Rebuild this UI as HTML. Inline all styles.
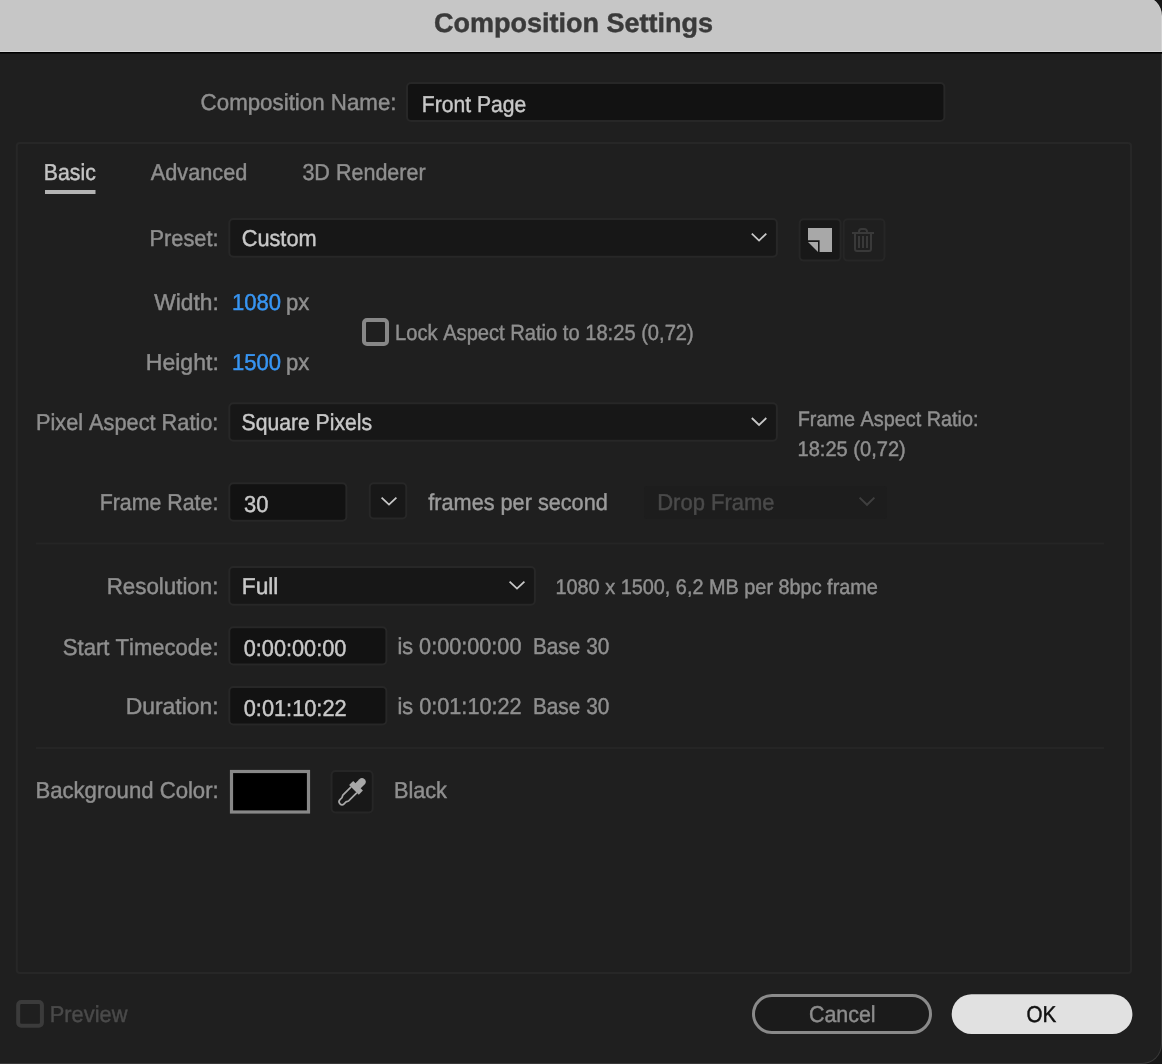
<!DOCTYPE html>
<html><head><meta charset="utf-8"><title>Composition Settings</title>
<style>
html,body{margin:0;padding:0;background:#141414;overflow:hidden}
svg{display:block;will-change:transform;text-rendering:geometricPrecision;font-family:"Liberation Sans",sans-serif;font-kerning:none}
</style></head><body>
<svg width="1162" height="1064" viewBox="0 0 1162 1064">
<rect x="0" y="0" width="1162" height="1064" rx="0" fill="#171717"/>
<path d="M0,0 H1142 A20,20 0 0 1 1162,20 V1044 A20,20 0 0 1 1142,1064 H0 Z" fill="#383838"/>
<path d="M0,0 H1142 A19,19 0 0 1 1161,19 V1044 A19,19 0 0 1 1142,1063 H0 Z" fill="#1f1f1f"/>
<path d="M0,-4 H1142 A20,20 0 0 1 1162,16 V51 H0 Z" fill="#d4d4d4"/>
<path d="M0,-4 H1142 A19,19 0 0 1 1161,15 V51 H0 Z" fill="#c6c6c6"/>
<rect x="0" y="51" width="1162" height="1" rx="0" fill="#d5d5d5"/>
<rect x="0" y="52" width="1162" height="1" rx="0" fill="#000000"/>
<rect x="0" y="53" width="1162" height="1" rx="0" fill="#101010"/>
<text x="434.09" y="32.20" font-size="27" font-weight="bold" fill="#3a3a3a" stroke="#3a3a3a" stroke-width="0.45" textLength="279.02" lengthAdjust="spacingAndGlyphs">Composition Settings</text>
<text x="200.62" y="110.20" font-size="23" font-weight="normal" fill="#8f8f8f" stroke="#8f8f8f" stroke-width="0.45" textLength="195.92" lengthAdjust="spacingAndGlyphs">Composition Name:</text>
<rect x="407.0" y="83.0" width="537.4" height="38" rx="4" fill="#121212" stroke="#272727" stroke-width="2"/>
<text x="421.77" y="112.00" font-size="23" font-weight="normal" fill="#c8c8c8" stroke="#c8c8c8" stroke-width="0.45" textLength="104.47" lengthAdjust="spacingAndGlyphs">Front Page</text>
<rect x="16.8" y="143" width="1114.2" height="830" rx="3" fill="#1f1f1f" stroke="#272727" stroke-width="2"/>
<text x="43.86" y="180.20" font-size="23" font-weight="normal" fill="#c4c4c4" stroke="#c4c4c4" stroke-width="0.45" textLength="51.90" lengthAdjust="spacingAndGlyphs">Basic</text>
<rect x="45" y="190" width="50.5" height="4" rx="0" fill="#b4b4b4"/>
<text x="150.76" y="180.20" font-size="23" font-weight="normal" fill="#8f8f8f" stroke="#8f8f8f" stroke-width="0.45" textLength="96.54" lengthAdjust="spacingAndGlyphs">Advanced</text>
<text x="302.38" y="180.20" font-size="23" font-weight="normal" fill="#8f8f8f" stroke="#8f8f8f" stroke-width="0.45" textLength="123.28" lengthAdjust="spacingAndGlyphs">3D Renderer</text>
<text x="149.41" y="246.10" font-size="23" font-weight="normal" fill="#8f8f8f" stroke="#8f8f8f" stroke-width="0.45" textLength="69.19" lengthAdjust="spacingAndGlyphs">Preset:</text>
<rect x="229.3" y="219.0" width="547.5999999999999" height="37.80000000000001" rx="4" fill="#171717" stroke="#272727" stroke-width="2"/>
<text x="241.70" y="246.10" font-size="23" font-weight="normal" fill="#c8c8c8" stroke="#c8c8c8" stroke-width="0.45" textLength="74.94" lengthAdjust="spacingAndGlyphs">Custom</text>
<polyline points="751.8,233.6 759.05,240.6 766.3,233.6" fill="none" stroke="#c8c8c8" stroke-width="1.8" stroke-linecap="butt" stroke-linejoin="miter"/>
<rect x="799.6" y="219.2" width="41.0" height="41.400000000000034" rx="4" fill="#181818" stroke="#262626" stroke-width="2"/>
<path d="M808,228 H832 V252 H819.6 V240.3 H808 Z" fill="#a8a8a8"/>
<path d="M808,242 H818 V252 Z" fill="#a8a8a8"/>
<rect x="843.7" y="219.2" width="40.799999999999955" height="41.400000000000034" rx="4" fill="#1f1f1f" stroke="#262626" stroke-width="2"/>
<g fill="none" stroke="#393939" stroke-width="2"><path d="M852,233 H874"/><path d="M859,233 V231.5 A2.5,2.5 0 0 1 861.5,229 H864.5 A2.5,2.5 0 0 1 867,231.5 V233"/><path d="M855,234 V249 A2,2 0 0 0 857,251 H869 A2,2 0 0 0 871,249 V234"/><path d="M859,236 V248 M863,236 V248 M867,236 V248"/></g>
<text x="154.20" y="309.70" font-size="23" font-weight="normal" fill="#8f8f8f" stroke="#8f8f8f" stroke-width="0.45" textLength="64.58" lengthAdjust="spacingAndGlyphs">Width:</text>
<text x="232.02" y="309.70" font-size="23" font-weight="normal" fill="#3895f2" stroke="#3895f2" stroke-width="0.45" textLength="49.04" lengthAdjust="spacingAndGlyphs">1080</text>
<text x="286.08" y="309.70" font-size="23" font-weight="normal" fill="#8f8f8f" stroke="#8f8f8f" stroke-width="0.45" textLength="23.26" lengthAdjust="spacingAndGlyphs">px</text>
<text x="145.81" y="369.80" font-size="23" font-weight="normal" fill="#8f8f8f" stroke="#8f8f8f" stroke-width="0.45" textLength="72.99" lengthAdjust="spacingAndGlyphs">Height:</text>
<text x="232.02" y="369.80" font-size="23" font-weight="normal" fill="#3895f2" stroke="#3895f2" stroke-width="0.45" textLength="49.04" lengthAdjust="spacingAndGlyphs">1500</text>
<text x="286.08" y="369.80" font-size="23" font-weight="normal" fill="#8f8f8f" stroke="#8f8f8f" stroke-width="0.45" textLength="23.26" lengthAdjust="spacingAndGlyphs">px</text>
<rect x="364" y="320" width="23" height="24" rx="3" fill="none" stroke="#878787" stroke-width="4"/>
<text x="395.05" y="340.10" font-size="22" font-weight="normal" fill="#8f8f8f" stroke="#8f8f8f" stroke-width="0.45" textLength="298.70" lengthAdjust="spacingAndGlyphs">Lock Aspect Ratio to 18:25 (0,72)</text>
<text x="35.97" y="429.90" font-size="23" font-weight="normal" fill="#8f8f8f" stroke="#8f8f8f" stroke-width="0.45" textLength="182.42" lengthAdjust="spacingAndGlyphs">Pixel Aspect Ratio:</text>
<rect x="229.3" y="403.2" width="547.5999999999999" height="37.60000000000002" rx="4" fill="#171717" stroke="#272727" stroke-width="2"/>
<text x="241.54" y="429.80" font-size="23" font-weight="normal" fill="#c8c8c8" stroke="#c8c8c8" stroke-width="0.45" textLength="130.53" lengthAdjust="spacingAndGlyphs">Square Pixels</text>
<polyline points="751.8,418 759.05,425 766.3,418" fill="none" stroke="#c8c8c8" stroke-width="1.8" stroke-linecap="butt" stroke-linejoin="miter"/>
<text x="797.67" y="426.00" font-size="21" font-weight="normal" fill="#8f8f8f" stroke="#8f8f8f" stroke-width="0.45" textLength="180.84" lengthAdjust="spacingAndGlyphs">Frame Aspect Ratio:</text>
<text x="797.47" y="456.00" font-size="21" font-weight="normal" fill="#8f8f8f" stroke="#8f8f8f" stroke-width="0.45" textLength="108.27" lengthAdjust="spacingAndGlyphs">18:25 (0,72)</text>
<text x="99.65" y="509.90" font-size="23" font-weight="normal" fill="#8f8f8f" stroke="#8f8f8f" stroke-width="0.45" textLength="118.70" lengthAdjust="spacingAndGlyphs">Frame Rate:</text>
<rect x="229.3" y="483.2" width="117.09999999999997" height="37.599999999999966" rx="4" fill="#121212" stroke="#272727" stroke-width="2"/>
<text x="243.96" y="511.90" font-size="23" font-weight="normal" fill="#c8c8c8" stroke="#c8c8c8" stroke-width="0.45" textLength="24.39" lengthAdjust="spacingAndGlyphs">30</text>
<rect x="369.7" y="483.2" width="36.60000000000002" height="35.19999999999999" rx="4" fill="#181818" stroke="#272727" stroke-width="2"/>
<polyline points="381.6,497.6 389.0,504.6 396.4,497.6" fill="none" stroke="#c8c8c8" stroke-width="1.8" stroke-linecap="butt" stroke-linejoin="miter"/>
<text x="428.29" y="510.00" font-size="23" font-weight="normal" fill="#9c9c9c" stroke="#9c9c9c" stroke-width="0.45" textLength="179.50" lengthAdjust="spacingAndGlyphs">frames per second</text>
<rect x="644" y="486" width="243" height="33" rx="3" fill="#1d1d1d"/>
<text x="657.19" y="510.00" font-size="23" font-weight="normal" fill="#4a4a4a" stroke="#4a4a4a" stroke-width="0.45" textLength="117.38" lengthAdjust="spacingAndGlyphs">Drop Frame</text>
<polyline points="859.6,497.6 867.0,504.8 874.4,497.6" fill="none" stroke="#3f3f3f" stroke-width="2" stroke-linecap="butt" stroke-linejoin="miter"/>
<rect x="36" y="542.5" width="1068" height="2" rx="0" fill="#252525"/>
<text x="106.67" y="594.20" font-size="23" font-weight="normal" fill="#8f8f8f" stroke="#8f8f8f" stroke-width="0.45" textLength="111.77" lengthAdjust="spacingAndGlyphs">Resolution:</text>
<rect x="229.3" y="567.1" width="305.59999999999997" height="37.60000000000002" rx="4" fill="#171717" stroke="#272727" stroke-width="2"/>
<text x="241.73" y="594.20" font-size="23" font-weight="normal" fill="#c8c8c8" stroke="#c8c8c8" stroke-width="0.45" textLength="36.69" lengthAdjust="spacingAndGlyphs">Full</text>
<polyline points="509.6,581.6 517.0,588.6 524.4,581.6" fill="none" stroke="#c8c8c8" stroke-width="1.8" stroke-linecap="butt" stroke-linejoin="miter"/>
<text x="555.49" y="594.40" font-size="21" font-weight="normal" fill="#8f8f8f" stroke="#8f8f8f" stroke-width="0.45" textLength="322.40" lengthAdjust="spacingAndGlyphs">1080 x 1500, 6,2 MB per 8bpc frame</text>
<text x="62.80" y="654.50" font-size="23" font-weight="normal" fill="#8f8f8f" stroke="#8f8f8f" stroke-width="0.45" textLength="155.72" lengthAdjust="spacingAndGlyphs">Start Timecode:</text>
<rect x="229.3" y="627.2" width="157.09999999999997" height="37.299999999999955" rx="4" fill="#121212" stroke="#272727" stroke-width="2"/>
<text x="243.75" y="655.70" font-size="23" font-weight="normal" fill="#c8c8c8" stroke="#c8c8c8" stroke-width="0.45" textLength="102.60" lengthAdjust="spacingAndGlyphs">0:00:00:00</text>
<text x="397.45" y="653.90" font-size="23" font-weight="normal" fill="#8f8f8f" stroke="#8f8f8f" stroke-width="0.45" textLength="123.99" lengthAdjust="spacingAndGlyphs">is 0:00:00:00</text>
<text x="532.89" y="653.90" font-size="23" font-weight="normal" fill="#8f8f8f" stroke="#8f8f8f" stroke-width="0.45" textLength="76.42" lengthAdjust="spacingAndGlyphs">Base 30</text>
<text x="125.72" y="714.20" font-size="23" font-weight="normal" fill="#8f8f8f" stroke="#8f8f8f" stroke-width="0.45" textLength="92.87" lengthAdjust="spacingAndGlyphs">Duration:</text>
<rect x="229.3" y="687.1" width="157.09999999999997" height="37.299999999999955" rx="4" fill="#121212" stroke="#272727" stroke-width="2"/>
<text x="243.75" y="715.70" font-size="23" font-weight="normal" fill="#c8c8c8" stroke="#c8c8c8" stroke-width="0.45" textLength="102.84" lengthAdjust="spacingAndGlyphs">0:01:10:22</text>
<text x="397.45" y="713.90" font-size="23" font-weight="normal" fill="#8f8f8f" stroke="#8f8f8f" stroke-width="0.45" textLength="124.24" lengthAdjust="spacingAndGlyphs">is 0:01:10:22</text>
<text x="532.89" y="713.90" font-size="23" font-weight="normal" fill="#8f8f8f" stroke="#8f8f8f" stroke-width="0.45" textLength="76.42" lengthAdjust="spacingAndGlyphs">Base 30</text>
<rect x="36" y="747" width="1068" height="2" rx="0" fill="#252525"/>
<text x="35.38" y="797.90" font-size="23" font-weight="normal" fill="#8f8f8f" stroke="#8f8f8f" stroke-width="0.45" textLength="183.34" lengthAdjust="spacingAndGlyphs">Background Color:</text>
<rect x="231.5" y="771.5" width="77" height="40.5" rx="0" fill="#000000" stroke="#888888" stroke-width="3.2"/>
<rect x="331.5" y="771.0" width="41.19999999999999" height="41.39999999999998" rx="4" fill="#181818" stroke="#262626" stroke-width="2"/>
<g transform="translate(351.9,791.9) rotate(45)" fill="#a8a8a8"><path d="M-3.7,-8 V-14.2 A3.7,3.7 0 0 1 3.7,-14.2 V-8 Z"/><rect x="-6.85" y="-8.7" width="13.7" height="5.8"/><path d="M-4.1,-3 V8.7 L-2.9,11.2 V13.95 A2.9,2.9 0 0 0 2.9,13.95 V11.2 L4.1,8.7 V-3" fill="none" stroke="#a8a8a8" stroke-width="1.7" stroke-linejoin="round"/></g>
<text x="393.92" y="798.10" font-size="23" font-weight="normal" fill="#8f8f8f" stroke="#8f8f8f" stroke-width="0.45" textLength="53.05" lengthAdjust="spacingAndGlyphs">Black</text>
<rect x="18.2" y="1002.1" width="23.7" height="23.7" rx="3" fill="none" stroke="#3b3b3b" stroke-width="4"/>
<text x="49.81" y="1021.90" font-size="23" font-weight="normal" fill="#4a4a4a" stroke="#4a4a4a" stroke-width="0.45" textLength="77.64" lengthAdjust="spacingAndGlyphs">Preview</text>
<rect x="753.5" y="995.5" width="177" height="37" rx="18.5" fill="#1b1b1b" stroke="#8a8a8a" stroke-width="3"/>
<text x="808.91" y="1022.00" font-size="23" font-weight="normal" fill="#8c8c8c" stroke="#8c8c8c" stroke-width="0.45" textLength="66.72" lengthAdjust="spacingAndGlyphs">Cancel</text>
<rect x="951.7" y="994.3" width="180.7" height="39.6" rx="19.8" fill="#e1e1e1"/>
<text x="1026.42" y="1022.00" font-size="23" font-weight="normal" fill="#111111" stroke="#111111" stroke-width="0.45" textLength="29.81" lengthAdjust="spacingAndGlyphs">OK</text>
</svg>
</body></html>
